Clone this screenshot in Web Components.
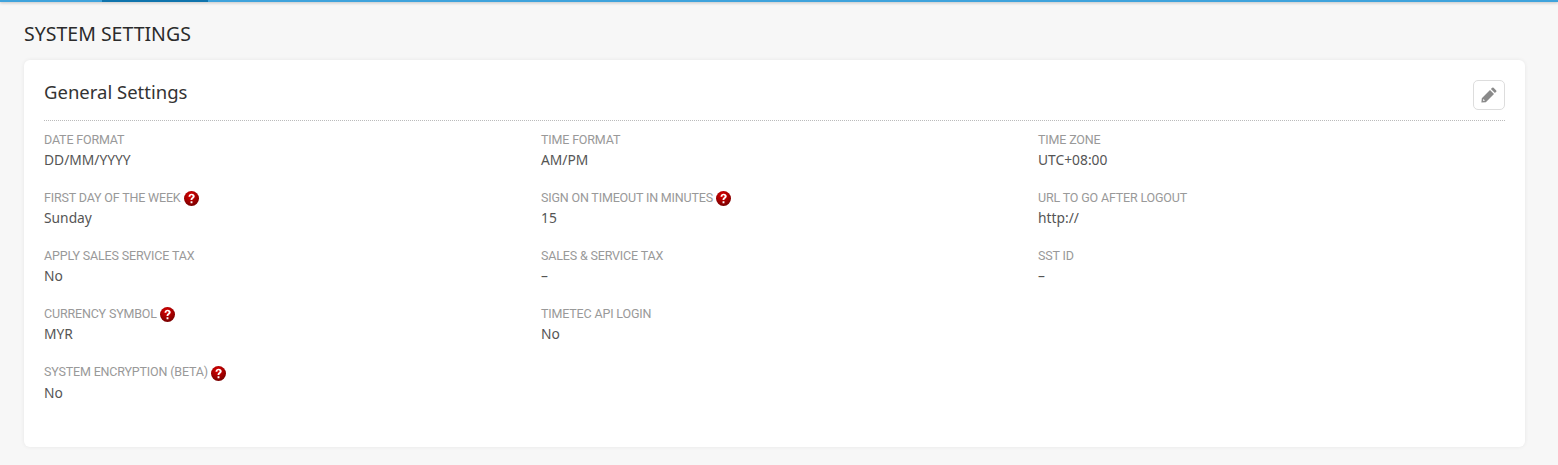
<!DOCTYPE html>
<html>
<head>
<meta charset="utf-8">
<style>
  html, body { margin: 0; height: 100%; }
  body { background: #f7f7f7; font-family: "Noto Sans", sans-serif; overflow: hidden; }
</style>
</head>
<body>
<top-bar></top-bar>
<settings-page heading="SYSTEM SETTINGS">
  <settings-card heading="General Settings">
    <setting-item label="DATE FORMAT">DD/MM/YYYY</setting-item>
    <setting-item label="TIME FORMAT">AM/PM</setting-item>
    <setting-item label="TIME ZONE">UTC+08:00</setting-item>
    <setting-item label="FIRST DAY OF THE WEEK" help>Sunday</setting-item>
    <setting-item label="SIGN ON TIMEOUT IN MINUTES" help>15</setting-item>
    <setting-item label="URL TO GO AFTER LOGOUT">http://</setting-item>
    <setting-item label="APPLY SALES SERVICE TAX">No</setting-item>
    <setting-item label="SALES &amp; SERVICE TAX">–</setting-item>
    <setting-item label="SST ID">–</setting-item>
    <setting-item label="CURRENCY SYMBOL" help>MYR</setting-item>
    <setting-item label="TIMETEC API LOGIN">No</setting-item>
    <span></span>
    <setting-item label="SYSTEM ENCRYPTION (BETA)" help style="--label-gap:3px;--icon-drop:4px">No</setting-item>
  </settings-card>
</settings-page>
<script>
class TopBar extends HTMLElement {
  constructor() {
    super();
    this.attachShadow({ mode: 'open' });
    this.shadowRoot.innerHTML = `
      <style>
        :host { display: block; height: 2px; background: #3fa3dc; box-shadow: 0 1px 3px rgba(0,0,0,.25); }
        div { width: 106px; height: 2px; margin-left: 102px; background: #0f74ad; }
      </style>
      <div></div>
    `;
  }
}
customElements.define('top-bar', TopBar);

class SettingsPage extends HTMLElement {
  constructor() {
    super();
    this.attachShadow({ mode: 'open' });
    this.shadowRoot.innerHTML = `
      <style>
        :host { display: block; padding: 19px 33px 0 24px; }
        h1 { margin: 0 0 13px; font-size: 19.5px; line-height: 26px; font-weight: 400; color: #2b2b2b; }
      </style>
      <h1>${this.getAttribute('heading')}</h1>
      <slot></slot>
    `;
  }
}
customElements.define('settings-page', SettingsPage);

class SettingsCard extends HTMLElement {
  constructor() {
    super();
    this.attachShadow({ mode: 'open' });
    this.shadowRoot.innerHTML = `
      <style>
        :host { display: block; height: 387px; box-sizing: border-box; padding: 20px 20px 0; background: #fff; border-radius: 6px; box-shadow: 0 0 4px rgba(0,0,0,.07); }
        header { display: flex; justify-content: space-between; height: 40px; border-bottom: 1px dotted #bbb; }
        h2 { margin: 0; font-size: 18.5px; line-height: 24px; font-weight: 400; color: #333; }
        button { width: 32px; height: 30px; padding: 0; display: flex; align-items: center; justify-content: center; background: #fff; border: 1px solid #ddd; border-radius: 5px; }
        svg { width: 16px; height: 16px; fill: #8a8a8a; }
        .grid { display: grid; grid-template-columns: repeat(3, 497px); grid-auto-rows: 58px; padding-top: 9px; }
      </style>
      <header>
        <h2>${this.getAttribute('heading')}</h2>
        <button aria-label="Edit">
          <svg viewBox="0 0 16 16"><path d="M11.2.8a1 1 0 0 1 1.4 0l2.6 2.6a1 1 0 0 1 0 1.4l-1.3 1.3-4-4zM9 3l4 4-8.2 8.2L.4 15.6.8 11.2zM2.4 12l-.4 2 2-.4z"/></svg>
        </button>
      </header>
      <div class="grid"><slot></slot></div>
    `;
  }
}
customElements.define('settings-card', SettingsCard);

class SettingItem extends HTMLElement {
  constructor() {
    super();
    this.attachShadow({ mode: 'open' });
    const help = this.hasAttribute('help') ? `
      <svg viewBox="0 0 16 16">
        <defs><radialGradient id="g" cx=".45" cy=".3" r=".75"><stop offset="0" stop-color="#e00000"/><stop offset="1" stop-color="#700000"/></radialGradient></defs>
        <circle cx="8" cy="8" r="8" fill="url(#g)"/>
        <path d="M4.8 6C4.9 4 6.3 2.8 8.2 2.8c1.9 0 3.2 1.2 3.2 2.8 0 1.1-.6 1.9-1.5 2.5-.7.4-.9.8-.9 1.5H7c0-1.4.4-2.1 1.3-2.7.6-.4.9-.8.9-1.3 0-.7-.4-1.1-1.1-1.1-.8 0-1.2.5-1.3 1.5zM7 11h2v2H7z" fill="#fff"/>
      </svg>` : '';
    this.shadowRoot.innerHTML = `
      <style>
        :host { display: block; }
        .label { display: flex; align-items: center; gap: 3px; height: 18px; margin-bottom: var(--label-gap, 2px); font-family: Roboto, sans-serif; font-size: 12.5px; letter-spacing: -.17px; color: #999; }
        .value { font-size: 13.8px; line-height: 20px; color: #555; }
        svg { width: 15px; height: 15px; margin-top: var(--icon-drop, 2px); }
      </style>
      <div class="label"><span>${this.getAttribute('label').replace('&', '&amp;')}</span>${help}</div>
      <div class="value"><slot></slot></div>
    `;
  }
}
customElements.define('setting-item', SettingItem);
</script>
</body>
</html>
